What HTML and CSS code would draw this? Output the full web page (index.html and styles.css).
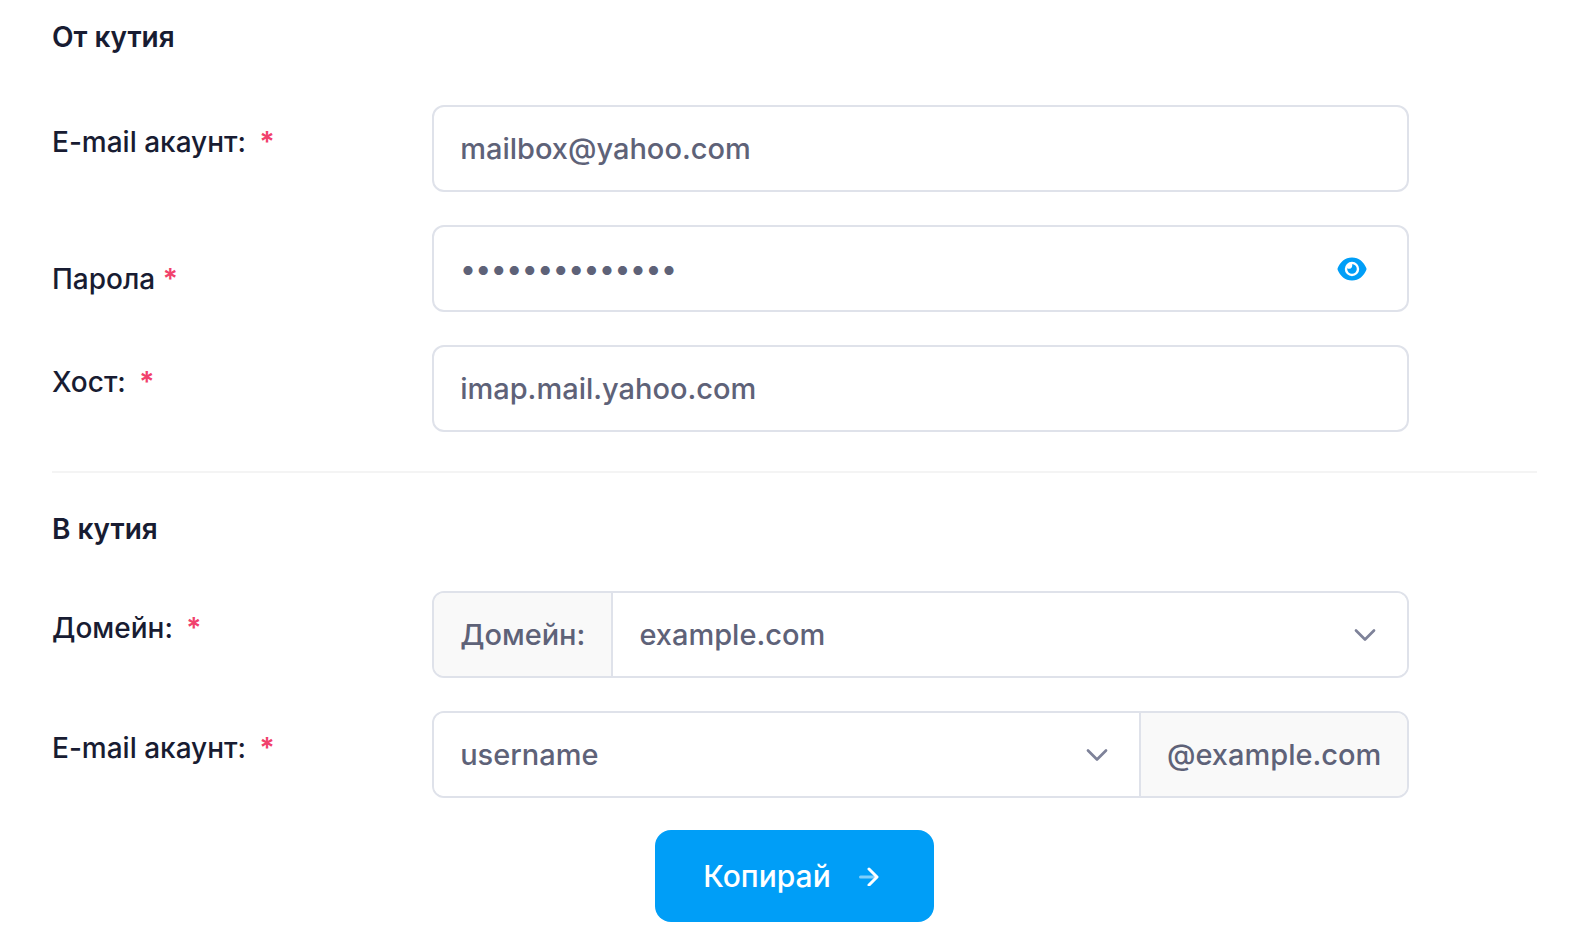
FILE: index.html
```
<!DOCTYPE html>
<html lang="bg">

<head>
    <meta charset="UTF-8">
    <meta name="viewport" content="width=device-width, initial-scale=1.0">
    <title>Копиране на кутия</title>
    <link rel="stylesheet" href="styles.css">
</head>

<body>
    <form class="copy-form">
        <!-- Source mailbox -->
        <section class="form-section">
            <h2 class="section-title">От кутия</h2>
            <div class="form-row">
                <label class="form-label" for="from-email">E-mail акаунт: <span class="required wide">*</span></label>
                <div class="field">
                    <input type="text" class="control" id="from-email" value="mailbox@yahoo.com">
                </div>
            </div>
            <div class="form-row">
                <label class="form-label low" for="from-password">Парола <span class="required">*</span></label>
                <div class="field">
                    <input type="password" class="control" id="from-password" value="password123456">
                    <button type="button" class="toggle-password" aria-label="Покажи паролата">
                        <svg viewBox="0 0 30 24" width="30" height="24">
                            <path fill="currentColor" fill-rule="evenodd" d="M15 .5C8 .5 3 5.200 .7 11a2.500 2.500 0 0 0 0 2C3 18.800 8 23.500 15 23.500S27 18.800 29.300 13a2.500 2.500 0 0 0 0-2C27 5.200 22 .5 15 .5ZM15 4.800a7.200 7.200 0 1 1 0 14.400 7.200 7.200 0 0 1 0-14.400Z" />
                            <path fill="currentColor" d="M15 7.200a4.800 4.800 0 1 1-4.800 4.800q0-.4.1-.7.900.5 2 .5a3.300 3.300 0 0 0 2.700-4.600Z" />
                        </svg>
                    </button>
                </div>
            </div>
            <div class="form-row">
                <label class="form-label" for="from-host">Хост: <span class="required wide">*</span></label>
                <div class="field">
                    <input type="text" class="control" id="from-host" value="imap.mail.yahoo.com">
                </div>
            </div>
        </section>

        <hr class="separator">

        <!-- Destination mailbox -->
        <section class="form-section">
            <h2 class="section-title">В кутия</h2>
            <div class="form-row">
                <label class="form-label" for="to-domain">Домейн: <span class="required wide">*</span></label>
                <div class="field group">
                    <span class="addon">Домейн:</span>
                    <select class="control select" id="to-domain">
                        <option>example.com</option>
                    </select>
                </div>
            </div>
            <div class="form-row">
                <label class="form-label" for="to-email">E-mail акаунт: <span class="required wide">*</span></label>
                <div class="field group">
                    <select class="control select" id="to-email">
                        <option>username</option>
                    </select>
                    <span class="addon">@example.com</span>
                </div>
            </div>
        </section>

        <div class="actions">
            <button type="submit" class="submit-btn">
                Копирай
                <svg viewBox="0 0 20 20" width="20" height="20" fill="none" stroke="#fff" stroke-width="3" stroke-linecap="round" stroke-linejoin="round">
                    <path d="M1.500 11H17" opacity=".5" />
                    <path d="M10 3l8 8-8 8" />
                </svg>
            </button>
        </div>
    </form>
</body>

</html>
```
FILE: styles.css
```
* {
    box-sizing: border-box;
}

body {
    margin: 0;
    background-color: #fff;
    color: #181c32;
    font-family: Inter, "Noto Sans", sans-serif;
    font-size: 28px;
    font-weight: 500;
    line-height: 42px;
}

.copy-form {
    padding: 16px 51px 24px 52px;
}

.form-section {
    display: flex;
    flex-direction: column;
    gap: 33px;
}

.section-title {
    margin: 0 0 14px;
    font-size: 28px;
    font-weight: 600;
}

.separator + .form-section .section-title {
    margin-bottom: 8px;
}

.form-row {
    display: flex;
    align-items: flex-start;
}

.form-label {
    width: 25.6%;
    padding-top: 16px;
}

/* The password label sits lower than the others */
.form-label.low {
    padding-top: 33px;
}

.required {
    color: #f1416c;
    font-weight: 600;
}

.required.wide {
    margin-left: 6px;
}

.field {
    position: relative;
    width: 65.8%;
}

.control {
    display: block;
    width: 100%;
    height: 87px;
    margin: 0;
    padding: 0 26px;
    border: 2px solid #dfe2ea;
    border-radius: 12px;
    background-color: #fff;
    color: #5e6278;
    font: inherit;
    font-size: 29px;
    outline: none;
}

.control:focus {
    border-color: #b5b5c3;
}

/* Eye button over the password input */
.toggle-password {
    position: absolute;
    top: 50%;
    right: 42px;
    transform: translateY(-50%);
    display: flex;
    padding: 0;
    border: none;
    background: none;
    color: #009ef7;
    cursor: pointer;
}

/* Select with a text addon in one frame */
.group {
    display: flex;
    height: 87px;
    border: 2px solid #dfe2ea;
    border-radius: 12px;
    overflow: hidden;
}

.group .control {
    flex: 1;
    width: auto;
    min-width: 0;
    height: 100%;
    border: none;
    border-radius: 0;
}

.addon {
    display: flex;
    align-items: center;
    padding: 0 26px;
    background-color: #f9f9f9;
    color: #5e6278;
    font-size: 29px;
}

.addon:first-child {
    border-right: 2px solid #dfe2ea;
}

.addon:last-child {
    border-left: 2px solid #dfe2ea;
}

.select {
    appearance: none;
    background-image: url("data:image/svg+xml,%3Csvg xmlns='http://www.w3.org/2000/svg' viewBox='0 0 16 16'%3E%3Cpath fill='none' stroke='%237e8299' stroke-linecap='round' stroke-linejoin='round' stroke-width='1.8' d='m2 5 6 6 6-6'/%3E%3C/svg%3E");
    background-repeat: no-repeat;
    background-position: right 30px center;
    background-size: 24px 24px;
    cursor: pointer;
}

.separator {
    height: 2px;
    margin: 39px 0 35px;
    border: none;
    background-color: #f4f4f4;
}

.actions {
    display: flex;
    justify-content: center;
    margin-top: 32px;
}

.submit-btn {
    display: flex;
    align-items: center;
    gap: 28px;
    height: 92px;
    padding: 0 55px 0 48px;
    border: none;
    border-radius: 16px;
    background-color: #009ef7;
    color: #fff;
    font: inherit;
    font-size: 30px;
    cursor: pointer;
}

.submit-btn:hover {
    background-color: #0095e8;
}
```
